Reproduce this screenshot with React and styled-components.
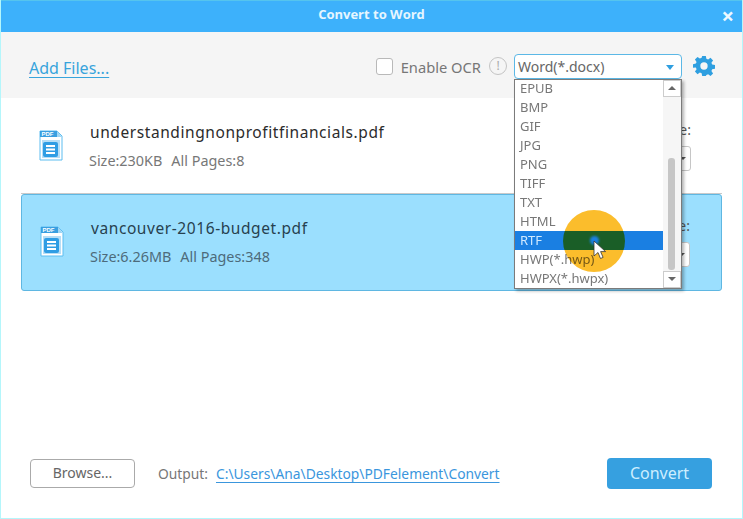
import React from 'react';
import styled, { createGlobalStyle } from 'styled-components';

const GlobalStyle = createGlobalStyle`
  html, body { margin: 0; padding: 0; background: #fff; }
  * { box-sizing: border-box; }
`;

const files = [
  { name: 'understandingnonprofitfinancials.pdf', size: '230KB', pages: '8' },
  { name: 'vancouver-2016-budget.pdf', size: '6.26MB', pages: '348', selected: true },
];

const formats = ['EPUB', 'BMP', 'GIF', 'JPG', 'PNG', 'TIFF', 'TXT', 'HTML', 'RTF', 'HWP(*.hwp)', 'HWPX(*.hwpx)'];

const PdfIcon = () => (
  <svg width="24" height="31" viewBox="0 0 24 31">
    <path d="M1 1h17l5 5v24H1z" fill="#fff" stroke="#5cbdf0" />
    <path d="M1 1h17v6H1z" fill="#3a9fe0" />
    <path d="M18 1l5 6h-5z" fill="#9fd6f5" />
    <text x="2.5" y="6.4" fontSize="6" fontWeight="700" fill="#fff" fontFamily="Liberation Sans, sans-serif">PDF</text>
    <rect x="3" y="10" width="18" height="18" fill="#b7def6" />
    <rect x="4" y="12" width="15" height="15" rx="2" fill="#2f9de4" />
    <path d="M7 16h9M7 19.5h9M7 23h9" stroke="#fff" strokeWidth="1.8" />
  </svg>
);

const GearIcon = () => (
  <svg width="22" height="22" viewBox="0 0 24 24" fill="#2f9fe0">
    <path
      fillRule="evenodd"
      d="M10 1h4l.6 3.1 1.9.8 2.6-1.8 2.8 2.8-1.8 2.6.8 1.9 3.1.6v4l-3.1.6-.8 1.9 1.8 2.6-2.8 2.8-2.6-1.8-1.9.8L14 23h-4l-.6-3.1-1.9-.8-2.6 1.8-2.8-2.8 1.8-2.6-.8-1.9L0 14v-4l3.1-.6.8-1.9L2.1 4.9l2.8-2.8 2.6 1.8 1.9-.8zM12 8a4 4 0 1 0 0 8 4 4 0 0 0 0-8z"
    />
  </svg>
);

export default function App() {
  return (
    <Window>
      <GlobalStyle />
      <TitleBar>
        <Title>Convert to Word</Title>
        <CloseButton>×</CloseButton>
      </TitleBar>
      <Toolbar>
        <AddFiles>Add Files...</AddFiles>
        <ToolbarRight>
          <Checkbox />
          <OcrLabel>Enable OCR</OcrLabel>
          <InfoMark>!</InfoMark>
          <FormatBox>
            <FormatSelect>
              Word(*.docx)
              <BlueCaret />
            </FormatSelect>
            <Dropdown>
              <OptionList>
                {formats.map((f) => (
                  <Option key={f} $active={f === 'RTF'}>
                    {f}
                  </Option>
                ))}
              </OptionList>
              <Scrollbar>
                <ScrollButton>
                  <Arrow $up />
                </ScrollButton>
                <ScrollTrack>
                  <ScrollThumb />
                </ScrollTrack>
                <ScrollButton>
                  <Arrow />
                </ScrollButton>
              </Scrollbar>
              <Highlight>
                <HighlightDot />
              </Highlight>
              <Pointer viewBox="0 0 14 20" width="14" height="20">
                <path d="M1 1v15l4-3.5 2.5 6 2.6-1.1-2.5-5.8h5z" fill="#fff" stroke="#333" strokeWidth="0.8" />
              </Pointer>
            </Dropdown>
          </FormatBox>
          <GearWrap>
            <GearIcon />
          </GearWrap>
        </ToolbarRight>
      </Toolbar>
      <FileList>
        {files.map((file) => (
          <FileRow key={file.name} $selected={file.selected}>
            <IconCell>
              <PdfIcon />
            </IconCell>
            <FileInfo>
              <FileName $selected={file.selected}>{file.name}</FileName>
              <FileMeta $selected={file.selected}>
                <span>Size:{file.size}</span>
                <span>All Pages:{file.pages}</span>
              </FileMeta>
            </FileInfo>
            <PageRange>
              <PageLabel>Page Range:</PageLabel>
              <PageInput>
                <SmallCaret />
              </PageInput>
            </PageRange>
          </FileRow>
        ))}
      </FileList>
      <Footer>
        <BrowseButton>Browse...</BrowseButton>
        <OutputLabel>Output:</OutputLabel>
        <OutputPath>C:\Users\Ana\Desktop\PDFelement\Convert</OutputPath>
        <ConvertButton>Convert</ConvertButton>
      </Footer>
    </Window>
  );
}

const Window = styled.div`
  width: 743px;
  height: 519px;
  display: flex;
  flex-direction: column;
  background: #fff;
  border: 1px solid #b4f6fb;
  border-top: 0;
  overflow: hidden;
  font-family: 'Noto Sans', 'Open Sans', sans-serif;
`;

const TitleBar = styled.div`
  position: relative;
  height: 32px;
  flex: none;
  background: #3db1fb;
  display: flex;
  align-items: center;
  justify-content: center;
  padding-bottom: 5px;
  border-top: 1px solid #55c4ee;
`;

const Title = styled.div`
  color: #e6f6ff;
  font-size: 13px;
  font-weight: 700;
  font-family: 'Open Sans', sans-serif;
`;

const CloseButton = styled.div`
  position: absolute;
  right: 8px;
  top: 0;
  color: #eef9ff;
  font-size: 22px;
  line-height: 28px;
  font-weight: 700;
`;

const Toolbar = styled.div`
  height: 66px;
  flex: none;
  background: #f5f5f5;
  display: flex;
  align-items: center;
  justify-content: space-between;
  padding: 2px 27px 0 28px;
`;

const AddFiles = styled.a`
  color: #38a4dc;
  font-size: 16px;
  padding-top: 3px;
  text-decoration: underline;
  text-underline-offset: 3px;
`;

const ToolbarRight = styled.div`
  display: flex;
  align-items: center;
`;

const Checkbox = styled.div`
  width: 17px;
  height: 17px;
  background: #fff;
  border: 1px solid #b9b9b9;
  border-radius: 3px;
  margin-right: 8px;
`;

const OcrLabel = styled.div`
  color: #777;
  font-size: 14.7px;
  padding-top: 1px;
  margin-right: 8px;
`;

const InfoMark = styled.div`
  width: 18px;
  height: 18px;
  border: 1.5px solid #c4c4c4;
  border-radius: 50%;
  color: #aaa;
  font-size: 12px;
  line-height: 15px;
  text-align: center;
  margin-right: 7px;
`;

const FormatBox = styled.div`
  position: relative;
  width: 168px;
  margin-right: 11px;
`;

const FormatSelect = styled.div`
  height: 25px;
  background: #fff;
  border: 1px solid #5cb8e6;
  border-radius: 4px;
  color: #666;
  font-size: 14px;
  line-height: 23px;
  padding-left: 3px;
  position: relative;
`;

const BlueCaret = styled.span`
  position: absolute;
  right: 7px;
  top: 10px;
  border-left: 4px solid transparent;
  border-right: 4px solid transparent;
  border-top: 5px solid #2f9fe0;
`;

const Dropdown = styled.div`
  position: absolute;
  z-index: 5;
  top: 25px;
  left: 0;
  width: 168px;
  height: 210px;
  background: #fff;
  border: 1px solid #7b7b7b;
  box-shadow: 2px 2px 3px rgba(0, 0, 0, 0.3);
  display: flex;
  overflow: hidden;
`;

const OptionList = styled.div`
  flex: 1;
  margin-top: -1px;
`;

const Option = styled.div`
  height: 19px;
  padding-left: 5px;
  font-size: 13px;
  line-height: 19px;
  color: ${(p) => (p.$active ? '#cfe9ff' : '#777')};
  background: ${(p) => (p.$active ? '#1a7fe2' : 'transparent')};
`;

const Scrollbar = styled.div`
  width: 18px;
  flex: none;
  display: flex;
  flex-direction: column;
  background: #f6f6f6;
`;

const ScrollButton = styled.div`
  height: 17px;
  flex: none;
  background: #fff;
  border: 1px solid #ccc;
  display: flex;
  align-items: center;
  justify-content: center;
`;

const Arrow = styled.span`
  border-left: 4px solid transparent;
  border-right: 4px solid transparent;
  ${(p) => (p.$up ? 'border-bottom: 4px solid #666;' : 'border-top: 4px solid #666;')}
`;

const ScrollTrack = styled.div`
  flex: 1;
  padding: 61px 6px 0 5px;
  display: flex;
`;

const ScrollThumb = styled.div`
  flex: 1;
  height: 112px;
  background: #c6c6c6;
  border-radius: 3px;
`;

const Highlight = styled.div`
  position: absolute;
  left: 48px;
  top: 130px;
  width: 62px;
  height: 62px;
  border-radius: 50%;
  background: #fbbd2c;
  mix-blend-mode: multiply;
  display: flex;
  align-items: center;
  justify-content: center;
`;

const HighlightDot = styled.div`
  width: 9px;
  height: 9px;
  border-radius: 50%;
  background: #fff;
  filter: blur(1px);
`;

const Pointer = styled.svg`
  position: absolute;
  left: 78px;
  top: 160px;
`;

const FileList = styled.div`
  flex: 1;
  display: flex;
  flex-direction: column;
  padding: 0 20px;
`;

const FileRow = styled.div`
  height: ${(p) => (p.$selected ? '97px' : '96px')};
  display: flex;
  align-items: center;
  padding: ${(p) => (p.$selected ? '0 31px 2px 18px' : '0 31px 0 18px')};
  background: ${(p) => (p.$selected ? '#9bdffe' : '#fff')};
  border-radius: ${(p) => (p.$selected ? '3px' : '0')};
  border: ${(p) => (p.$selected ? '1px solid #5fb7e2' : '0')};
  border-bottom: ${(p) => (p.$selected ? '1px solid #5fb7e2' : '1px solid #c9c9c9')};
`;

const IconCell = styled.div`
  width: 51px;
  flex: none;
  display: flex;
`;

const FileInfo = styled.div`
  flex: 1;
  display: flex;
  flex-direction: column;
  gap: 8px;
`;

const FileName = styled.div`
  font-size: 15.5px;
  letter-spacing: 0.58px;
  line-height: 21px;
  color: ${(p) => (p.$selected ? '#27414f' : '#2c2c2c')};
`;

const FileMeta = styled.div`
  display: flex;
  gap: 9px;
  margin-left: -1px;
  font-size: 14.4px;
  line-height: 19px;
  color: ${(p) => (p.$selected ? '#4d6b7b' : '#777')};
`;

const PageRange = styled.div`
  width: 90px;
  flex: none;
  display: flex;
  flex-direction: column;
  align-items: flex-end;
  gap: 6px;
`;

const PageLabel = styled.div`
  font-size: 14px;
  line-height: 20px;
  color: #555;
`;

const PageInput = styled.div`
  position: relative;
  width: 90px;
  height: 25px;
  background: #fff;
  border: 1px solid #c6c6c6;
  border-radius: 3px;
`;

const SmallCaret = styled.span`
  position: absolute;
  right: 4px;
  top: 10px;
  border-left: 3px solid transparent;
  border-right: 3px solid transparent;
  border-top: 3px solid #555;
`;

const Footer = styled.div`
  height: 85px;
  flex: none;
  display: flex;
  align-items: center;
  padding: 0 30px 4px 29px;
`;

const BrowseButton = styled.div`
  width: 105px;
  height: 29px;
  border: 1px solid #aaa;
  border-radius: 4px;
  background: #fff;
  color: #666;
  font-size: 14px;
  line-height: 26px;
  text-align: center;
  margin-right: 23px;
`;

const OutputLabel = styled.div`
  color: #777;
  font-size: 13.8px;
  margin-right: 8px;
`;

const OutputPath = styled.a`
  color: #3a96dd;
  font-size: 13.8px;
  text-decoration: underline;
  text-underline-offset: 3px;
  flex: 1;
`;

const ConvertButton = styled.div`
  width: 105px;
  height: 31px;
  background: #36a0e0;
  border-radius: 4px;
  color: #cdeeff;
  font-size: 16px;
  line-height: 30px;
  text-align: center;
`;

const GearWrap = styled.div`
  display: flex;
`;
